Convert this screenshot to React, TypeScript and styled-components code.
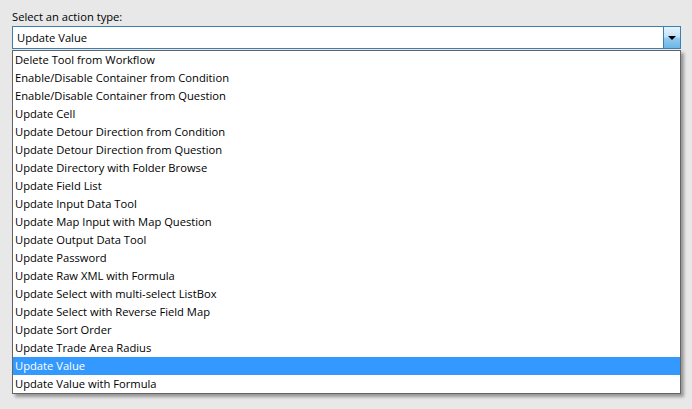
import React from 'react';
import styled, { createGlobalStyle } from 'styled-components';

const GlobalStyle = createGlobalStyle`
    html, body {
        margin: 0;
        padding: 0;
        background: #e8e8e8;
    }
    body {
        font-family: "Open Sans", "Noto Sans", sans-serif;
        font-size: 11.2px;
        color: #000;
    }
`;

const options = [
    'Delete Tool from Workflow',
    'Enable/Disable Container from Condition',
    'Enable/Disable Container from Question',
    'Update Cell',
    'Update Detour Direction from Condition',
    'Update Detour Direction from Question',
    'Update Directory with Folder Browse',
    'Update Field List',
    'Update Input Data Tool',
    'Update Map Input with Map Question',
    'Update Output Data Tool',
    'Update Password',
    'Update Raw XML with Formula',
    'Update Select with multi-select ListBox',
    'Update Select with Reverse Field Map',
    'Update Sort Order',
    'Update Trade Area Radius',
    'Update Value',
    'Update Value with Formula',
];

const Page = styled.div`
    padding: 8px 12px 0 12px;
    width: 669px;
    height: 401px;
`;

const Label = styled.div`
    height: 18px;
    line-height: 18px;
`;

const Combo = styled.div`
    position: relative;
    width: 669px;
`;

const Field = styled.div`
    display: flex;
    height: 23px;
    box-sizing: border-box;
    border: 1px solid #3c7fb1;
    background: #fff;
`;

const FieldText = styled.div`
    flex: 1;
    padding-left: 4px;
    line-height: 21px;
`;

const ArrowButton = styled.div`
    width: 16px;
    display: flex;
    align-items: center;
    justify-content: center;
    border-left: 1px solid #3c7fb1;
    background: linear-gradient(#e4f2fb 0%, #c4e3f7 45%, #8fcaf0 55%, #6cb6e8 100%);
`;

const Arrow = styled.div`
    width: 0;
    height: 0;
    border-left: 4px solid transparent;
    border-right: 4px solid transparent;
    border-top: 4px solid #000;
    margin-top: 1px;
`;

const DropList = styled.ul`
    position: absolute;
    top: 24px;
    left: 0;
    right: 0;
    margin: 0;
    padding: 0;
    list-style: none;
    background: #fff;
    border: 1px solid #646464;
    box-shadow: 3px 3px 3px rgba(0, 0, 0, 0.35);
`;

const Item = styled.li<{ $selected?: boolean }>`
    height: 18px;
    line-height: 18px;
    padding-left: 2px;
    white-space: nowrap;
    background: ${({ $selected }) => ($selected ? '#3399ff' : 'transparent')};
    color: ${({ $selected }) => ($selected ? '#fff' : '#000')};
`;

export default function App() {
    const selected = 'Update Value';
    return (
        <>
            <GlobalStyle />
            <Page>
                <Label>Select an action type:</Label>
                <Combo>
                    <Field>
                        <FieldText>{selected}</FieldText>
                        <ArrowButton>
                            <Arrow />
                        </ArrowButton>
                    </Field>
                    <DropList>
                        {options.map((o) => (
                            <Item key={o} $selected={o === selected}>
                                {o}
                            </Item>
                        ))}
                    </DropList>
                </Combo>
            </Page>
        </>
    );
}
